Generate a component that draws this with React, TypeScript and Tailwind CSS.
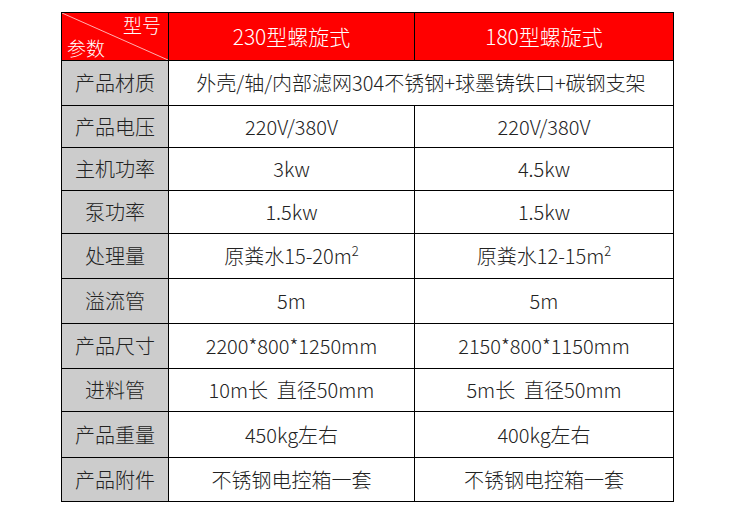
const font = { fontFamily: '"Noto Sans CJK SC", "Noto Sans", sans-serif' };

type Row = { label: string; h: string; a: React.ReactNode; b?: React.ReactNode };

const Sq = () => <span className="relative -top-[8px] text-[13px] leading-none">2</span>;

const rows: Row[] = [
  { label: '产品材质', h: 'h-[45px]', a: '外壳/轴/内部滤网304不锈钢+球墨铸铁口+碳钢支架' },
  { label: '产品电压', h: 'h-[42px]', a: '220V/380V', b: '220V/380V' },
  { label: '主机功率', h: 'h-[43px]', a: '3kw', b: '4.5kw' },
  { label: '泵功率', h: 'h-[43px]', a: '1.5kw', b: '1.5kw' },
  {
    label: '处理量',
    h: 'h-[45px]',
    a: (
      <>
        原粪水15-20m
        <Sq />
      </>
    ),
    b: (
      <>
        原粪水12-15m
        <Sq />
      </>
    ),
  },
  { label: '溢流管', h: 'h-[45px]', a: '5m', b: '5m' },
  { label: '产品尺寸', h: 'h-[45px]', a: '2200*800*1250mm', b: '2150*800*1150mm' },
  { label: '进料管', h: 'h-[43px]', a: '10m长  直径50mm', b: '5m长  直径50mm' },
  { label: '产品重量', h: 'h-[46px]', a: '450kg左右', b: '400kg左右' },
  { label: '产品附件', h: 'h-[44px]', a: '不锈钢电控箱一套', b: '不锈钢电控箱一套' },
];

export default function App() {
  return (
    <div className="h-[530px] w-[730px] bg-white pl-[61px] pt-[12px]" style={font}>
      <table className="w-[612px] table-fixed border-collapse text-[20px] font-light text-[#222]">
        <colgroup>
          <col className="w-[107px]" />
          <col className="w-[246px]" />
          <col className="w-[259px]" />
        </colgroup>
        <thead>
          <tr className="h-[48px] bg-[#ff0000] text-white">
            <th className="relative overflow-hidden border border-black p-0 font-light">
              <svg className="absolute inset-0 h-full w-full" viewBox="0 0 107 48" preserveAspectRatio="none">
                <line x1="0" y1="0" x2="107" y2="48" stroke="#ffb3b3" strokeWidth="1" />
              </svg>
              <span className="absolute right-[7px] top-[2px] text-[19px] leading-none">型号</span>
              <span className="absolute bottom-[3px] left-[5px] text-[19px] leading-none">参数</span>
            </th>
            <th className="border border-black text-[21px] font-light">230型螺旋式</th>
            <th className="border border-black text-[21px] font-light">180型螺旋式</th>
          </tr>
        </thead>
        <tbody>
          {rows.map((r) => (
            <tr key={r.label} className={r.h}>
              <td className="border border-black bg-[#cccccc] p-0 text-center">{r.label}</td>
              {r.b === undefined ? (
                <td colSpan={2} className="border border-black p-0 text-center whitespace-nowrap">
                  {r.a}
                </td>
              ) : (
                <>
                  <td className="border border-black p-0 text-center whitespace-pre">{r.a}</td>
                  <td className="border border-black p-0 text-center whitespace-pre">{r.b}</td>
                </>
              )}
            </tr>
          ))}
        </tbody>
      </table>
    </div>
  );
}
